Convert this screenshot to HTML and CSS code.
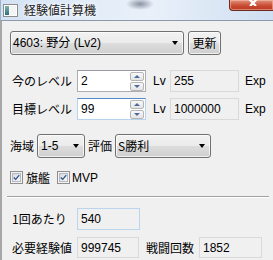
FILE: index.html
```html
<!DOCTYPE html>
<html lang="ja">
<head>
<meta charset="utf-8">
<title>経験値計算機</title>
<link rel="stylesheet" href="styles.css">
</head>
<body>
<div class="window">
  <div class="titlebar">
    <svg class="app-icon" width="15" height="13" viewBox="0 0 15 13">
      <defs>
        <linearGradient id="pane" x1="0" y1="0" x2="0" y2="1">
          <stop offset="0" stop-color="#7fb5a5"/>
          <stop offset="1" stop-color="#2f6f86"/>
        </linearGradient>
      </defs>
      <rect x="0.5" y="0.5" width="14" height="12" fill="#fff" stroke="#8d8d8d"/>
      <rect x="2" y="2" width="4" height="9" fill="url(#pane)"/>
      <rect x="7" y="2" width="6" height="9" fill="#f4f4f4"/>
    </svg>
    <span class="title">経験値計算機</span>
    <span class="close">
      <svg width="12" height="6" viewBox="0 0 12 6"><path d="M1 -2 L6 3 L11 -2 M6 3 L9 6 M6 3 L3 6" stroke="#fff" stroke-width="2.2" fill="none"/></svg>
    </span>
  </div>
  <div class="client">
    <div class="row row-top">
      <div class="combo combo-ship"><span class="combo-text">4603: 野分 (Lv2)</span><span class="arrow"></span></div>
      <button class="btn">更新</button>
    </div>

    <div class="row row-level">
      <span class="label">今のレベル</span>
      <div class="spin"><span class="field-text">2</span><span class="spin-btns"><span class="sb"><span class="tri up"></span></span><span class="sb"><span class="tri down"></span></span></span></div>
      <span class="unit">Lv</span>
      <div class="ro ro-exp">255</div>
      <span class="unit unit-exp">Exp</span>
    </div>

    <div class="row row-level row-target">
      <span class="label">目標レベル</span>
      <div class="spin focused"><span class="field-text">99</span><span class="spin-btns"><span class="sb"><span class="tri up"></span></span><span class="sb"><span class="tri down"></span></span></span></div>
      <span class="unit">Lv</span>
      <div class="ro ro-exp">1000000</div>
      <span class="unit unit-exp">Exp</span>
    </div>

    <div class="row row-sea">
      <span class="label-short">海域</span>
      <div class="combo combo-sea"><span class="combo-text">1-5</span><span class="arrow"></span></div>
      <span class="label-short label-rank">評価</span>
      <div class="combo combo-rank"><span class="combo-text">S勝利</span><span class="arrow"></span></div>
    </div>

    <div class="row row-check">
      <span class="check"><svg class="mark" width="9" height="9" viewBox="0 0 9 9"><path d="M1 4.5 L3.5 7 L8 1.5" stroke="#2b4f86" stroke-width="1.6" fill="none"/></svg></span>
      <span class="check-label">旗艦</span>
      <span class="check check-2"><svg class="mark" width="9" height="9" viewBox="0 0 9 9"><path d="M1 4.5 L3.5 7 L8 1.5" stroke="#2b4f86" stroke-width="1.6" fill="none"/></svg></span>
      <span class="check-label check-label-en">MVP</span>
    </div>

    <div class="separator"></div>

    <div class="row row-per">
      <span class="label">1回あたり</span>
      <div class="ro ro-per hover">540</div>
    </div>

    <div class="row row-need">
      <span class="label">必要経験値</span>
      <div class="ro ro-need">999745</div>
      <span class="label-battle">戦闘回数</span>
      <div class="ro ro-battle">1852</div>
    </div>
  </div>
</div>
</body>
</html>
```

FILE: styles.css
```css
* { box-sizing: border-box; }
html, body { margin: 0; padding: 0; }
body {
  width: 273px;
  height: 260px;
  overflow: hidden;
  font-family: "Liberation Sans", "Noto Sans CJK JP", sans-serif;
  font-size: 12px;
  color: #000;
  background: #f0f0f0;
}
.window { width: 273px; height: 260px; display: flex; flex-direction: column; }

.titlebar {
  height: 20px;
  flex: none;
  display: flex;
  align-items: flex-start;
  background:
    radial-gradient(ellipse 14px 6px at 139px 4px, rgba(60,70,90,0.55), rgba(60,70,90,0) 100%),
    linear-gradient(to right, #d3e2f4 0%, #e3edf8 35%, #e9f0f9 55%, #cfdff2 100%);
  border-left: 1px solid #9fb3c9;
}
.app-icon { margin: 4px 0 0 2px; flex: none; }
.title {
  margin: 1px 0 0 6px;
  font-family: "Noto Sans CJK JP", sans-serif;
  font-size: 12px;
  line-height: 18px;
  color: #1b1b1b;
  text-shadow: 0 0 6px #fff, 0 0 3px #fff;
}
.close {
  margin-left: auto;
  width: 44px;
  height: 11px;
  display: flex;
  justify-content: center;
  align-items: flex-start;
  padding-left: 2px;
  background: linear-gradient(#e0937e, #c8482f 60%, #b73a23);
  border: 1px solid #6b2a1f;
  border-top: none;
  border-right: none;
  border-radius: 0 0 0 4px;
  box-shadow: inset 0 0 0 1px rgba(255,200,180,0.5);
}

.client {
  flex: 1;
  border-top: 1px solid #8d99a8;
  border-left: 2px solid #a7a7a7;
  padding: 10px 0 0 8px;
  background: #f0f0f0;
}
.row { display: flex; align-items: center; }

.combo, .btn {
  border: 1px solid #707070;
  border-radius: 3px;
  background: linear-gradient(#f2f2f2 0%, #ebebeb 50%, #dddddd 51%, #cfcfcf 100%);
  box-shadow: inset 0 0 0 1px rgba(255,255,255,0.7);
  display: flex;
  align-items: center;
  font: inherit;
  color: #000;
}
.combo { padding-left: 2px; position: relative; }
.combo-text { white-space: nowrap; line-height: 16px; }
.arrow {
  margin-left: auto;
  margin-right: 5px;
  width: 0; height: 0;
  border-left: 3.5px solid transparent;
  border-right: 3.5px solid transparent;
  border-top: 4px solid #000;
}

.row-top { height: 24px; }
.combo-ship { width: 174px; height: 24px; }
.btn {
  width: 33px;
  height: 24px;
  margin-left: 4px;
  padding: 0;
  justify-content: center;
  font-family: "Noto Sans CJK JP", sans-serif;
  line-height: 16px;
}

.label {
  width: 67px;
  padding-left: 2px;
  white-space: nowrap;
  font-family: "Noto Sans CJK JP", sans-serif;
  line-height: 16px;
}
.row-level { height: 22px; margin-top: 15px; }
.row-target { margin-top: 6px; }

.spin {
  width: 69px;
  height: 22px;
  border: 1px solid #abadb3;
  border-top-color: #9a9ca2;
  background: #fff;
  display: flex;
  align-items: center;
}
.spin.focused { border-color: #b7d2ec; border-top-color: #4f8ccb; }
.field-text { padding-left: 3px; line-height: 16px; flex: 1; }
.spin-btns {
  width: 16px;
  height: 20px;
  display: flex;
  flex-direction: column;
  justify-content: space-between;
  padding: 1px 1px 0 1px;
}
.sb {
  height: 9px;
  border: 1px solid #b5b5b5;
  border-radius: 2px;
  background: linear-gradient(#f8f8f8, #e4e4e4);
  display: flex;
  align-items: center;
  justify-content: center;
}
.tri { width: 0; height: 0; border-left: 3px solid transparent; border-right: 3px solid transparent; }
.tri.up { border-bottom: 3px solid #4c6a9c; }
.tri.down { border-top: 3px solid #4c6a9c; }

.unit { width: 24px; padding-left: 7px; line-height: 16px; }
.unit-exp { width: auto; padding-left: 6px; }

.ro {
  height: 22px;
  border: 1px solid #d9d9d9;
  background: #f0f0f0;
  padding-left: 3px;
  display: flex;
  align-items: center;
  line-height: 16px;
}
.ro.hover { border-color: #bcd5ee; }
.ro-exp { width: 69px; }

.row-sea { height: 24px; margin-top: 14px; }
.label-short { width: 27px; font-family: "Noto Sans CJK JP", sans-serif; line-height: 16px; white-space: nowrap; }
.label-rank { width: 27px; margin-left: 3px; }
.combo-sea { width: 48px; height: 24px; padding-left: 3px; }
.combo-rank { width: 96px; height: 24px; }
.combo-rank .combo-text { font-family: "Noto Sans CJK JP", sans-serif; }

.row-check { height: 13px; margin-top: 13px; }
.check {
  width: 13px;
  height: 13px;
  border: 1px solid #8f8f8f;
  background: #f4f4f4;
  padding: 1px;
  display: flex;
  align-items: center;
  justify-content: center;
}
.mark {
  width: 9px;
  height: 9px;
  border: 1px solid #b4b9c0;
  background: linear-gradient(135deg, #d7dadf, #f7f8f9);
  display: block;
}
.check-label { margin-left: 3px; line-height: 16px; font-family: "Noto Sans CJK JP", sans-serif; }
.check-2 { margin-left: 7px; }
.check-label-en { margin-left: 2px; font-family: "Liberation Sans", sans-serif; }

.separator {
  height: 1px;
  margin: 12px 0 0 -3px;
  width: 262px;
  background: #a0a0a0;
  border-bottom: 1px solid #fff;
  box-sizing: content-box;
}

.row-per { height: 22px; margin-top: 10px; }
.ro-per { width: 63px; }
.row-need { height: 21px; margin-top: 7px; }
.ro-need { width: 62px; height: 21px; }
.label-battle { width: 60px; padding-left: 7px; font-family: "Noto Sans CJK JP", sans-serif; line-height: 16px; white-space: nowrap; }
.ro-battle { width: 63px; height: 21px; }
```
